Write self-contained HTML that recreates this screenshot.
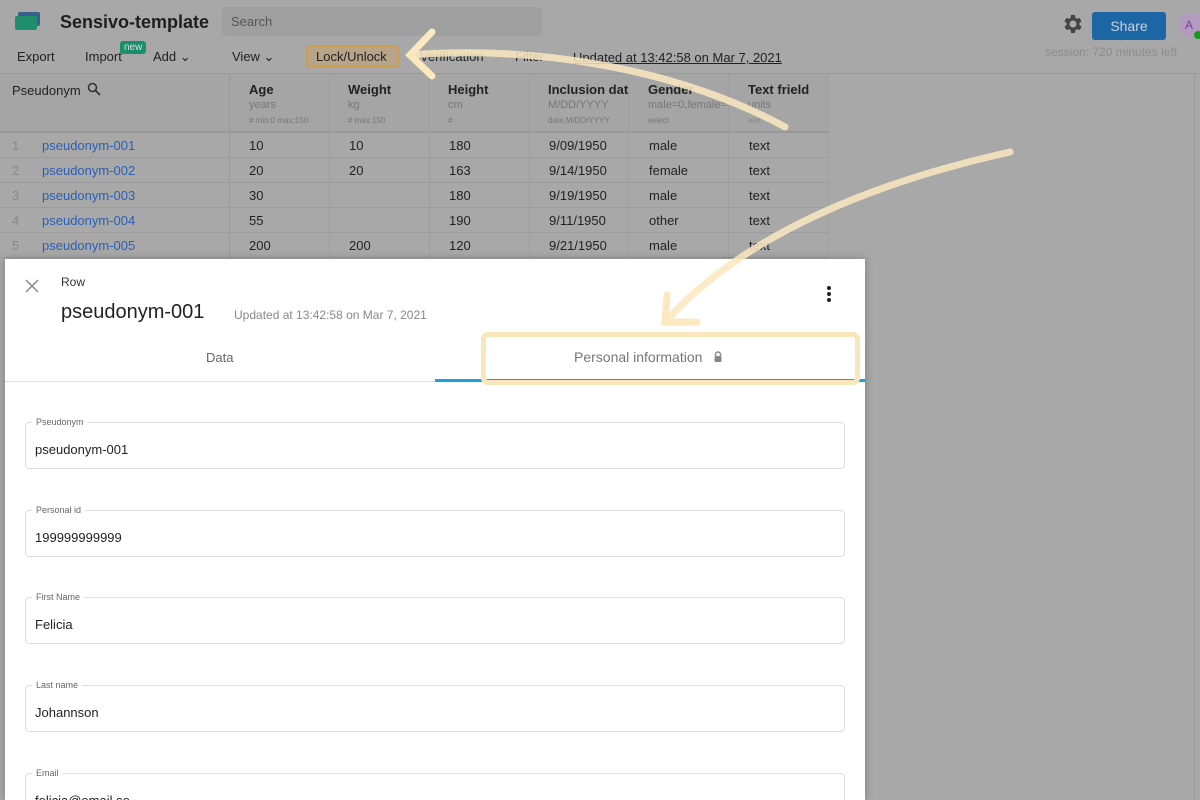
<!DOCTYPE html>
<html style="width:1200px;height:800px;overflow:hidden"><head><meta charset="utf-8"><style>
*{box-sizing:border-box;margin:0;padding:0}
body{width:1200px;height:800px;overflow:hidden;background:#a8a8a8;font-family:"Liberation Sans",sans-serif;position:relative;color:#222}
.a{position:absolute;white-space:nowrap}
.row{position:absolute;left:0;width:829px;height:25px;border-bottom:1px solid #9c9c9c;font-size:13px}
.row span{position:absolute;top:5px}
.fld{position:absolute;left:25px;width:820px;height:47px;border:1px solid #ddd;border-radius:4px}
.fld .l{position:absolute;top:-6px;left:6px;background:#fff;padding:0 4px;font-size:9px;color:#666}
.fld .v{position:absolute;top:19px;left:9px;font-size:13px;color:#222}
</style></head><body>
<svg class="a" style="left:14px;top:11px" width="28" height="20"><rect x="4" y="1" width="22" height="14" rx="2" fill="#3a5f8f"/><rect x="1" y="5" width="22" height="14" rx="2" fill="#1e8f6a"/></svg>
<div class="a" style="left:60px;top:12px;font-size:18px;font-weight:bold;color:#1f1f1f">Sensivo-template</div>
<div class="a" style="left:222px;top:7px;width:320px;height:29px;background:#9f9f9f;border-radius:4px;font-size:13px;color:#555;padding:7px 9px">Search</div>
<div class="a" style="left:17px;top:49px;font-size:13px">Export</div>
<div class="a" style="left:85px;top:49px;font-size:13px">Import</div>
<div class="a" style="left:120px;top:41px;background:#1a8f6a;color:#ddd;font-size:10px;padding:1px 4px;border-radius:3px">new</div>
<div class="a" style="left:153px;top:49px;font-size:13px">Add ⌄</div>
<div class="a" style="left:232px;top:49px;font-size:13px">View ⌄</div>
<div class="a" style="left:306px;top:46px;width:93px;height:21px;border:1px solid #c79a4a;background:#b7a489;border-radius:3px;font-size:13px;padding:2px 9px">Lock/Unlock</div>
<div class="a" style="left:420px;top:49px;font-size:13px">Verification</div>
<div class="a" style="left:515px;top:49px;font-size:13px">Filter</div>
<div class="a" style="left:573px;top:50px;font-size:13px;text-decoration:underline">Updated at 13:42:58 on Mar 7, 2021</div>
<svg class="a" style="left:1060px;top:12px" width="24" height="24" viewBox="0 0 24 24"><path fill="#444" d="M19.4 13a7.5 7.5 0 000-2l2.1-1.6-2-3.5-2.5 1a7 7 0 00-1.7-1L15 3h-4l-.4 2.9a7 7 0 00-1.7 1l-2.5-1-2 3.5L6.6 11a7.5 7.5 0 000 2l-2.1 1.6 2 3.5 2.5-1a7 7 0 001.7 1L11 21h4l.4-2.9a7 7 0 001.7-1l2.5 1 2-3.5zM13 15.5a3.5 3.5 0 110-7 3.5 3.5 0 010 7z"/></svg>
<div class="a" style="left:1092px;top:12px;width:74px;height:28px;background:#1c66a6;border-radius:3px;color:#c8d0dc;font-size:14px;text-align:center;line-height:28px">Share</div>
<div class="a" style="left:1178px;top:13px;width:24px;height:24px;border-radius:50%;background:#b39bbf;color:#7a3fa0;font-size:12px;padding:5px 7px">A</div>
<div class="a" style="left:1194px;top:31px;width:8px;height:8px;border-radius:50%;background:#1a9a1a"></div>
<div class="a" style="left:1045px;top:45px;font-size:12px;color:#8c8c8c">session: 720 minutes left</div>
<div class="a" style="left:0;top:73px;width:1200px;height:1px;background:#999"></div>
<div class="a" style="left:1194px;top:74px;width:1px;height:726px;background:#999"></div>
<div class="a" style="left:0;top:74px;width:829px;height:59px;border-bottom:2px solid #999;background:#a5a5a5"></div>
<div class="a" style="left:12px;top:83px;font-size:13px">Pseudonym</div>
<svg class="a" style="left:87px;top:82px" width="14" height="14"><circle cx="5.5" cy="5.5" r="4" fill="none" stroke="#333" stroke-width="1.6"/><path d="M8.5 8.5L13 13" stroke="#333" stroke-width="1.8"/></svg>
<div class="a" style="left:229px;top:74px;width:1px;height:186px;background:#9a9a9a"></div>
<div class="a" style="left:329px;top:74px;width:1px;height:186px;background:#9e9e9e"></div>
<div class="a" style="left:429px;top:74px;width:1px;height:186px;background:#9e9e9e"></div>
<div class="a" style="left:529px;top:74px;width:1px;height:186px;background:#9e9e9e"></div>
<div class="a" style="left:628px;top:74px;width:1px;height:186px;background:#9e9e9e"></div>
<div class="a" style="left:728px;top:74px;width:1px;height:186px;background:#9e9e9e"></div>
<div class="a" style="left:828px;top:74px;width:1px;height:186px;background:#9e9e9e"></div>
<div class="a" style="left:249px;top:83px;font-size:13px;font-weight:bold;line-height:14px">Age<br><span style="font-weight:normal;font-size:11px;color:#777">years</span><br><span style="font-weight:normal;font-size:8px;color:#777">#&nbsp;min:0 max:150</span></div>
<div class="a" style="left:348px;top:83px;font-size:13px;font-weight:bold;line-height:14px">Weight<br><span style="font-weight:normal;font-size:11px;color:#777">kg</span><br><span style="font-weight:normal;font-size:8px;color:#777">#&nbsp;max:150</span></div>
<div class="a" style="left:448px;top:83px;font-size:13px;font-weight:bold;line-height:14px">Height<br><span style="font-weight:normal;font-size:11px;color:#777">cm</span><br><span style="font-weight:normal;font-size:8px;color:#777">#</span></div>
<div class="a" style="left:548px;top:83px;width:80px;overflow:hidden;font-size:13px;font-weight:bold;line-height:14px">Inclusion dat<br><span style="font-weight:normal;font-size:11px;color:#777">M/DD/YYYY</span><br><span style="font-weight:normal;font-size:8px;color:#777">date,M/DD/YYYY</span></div>
<div class="a" style="left:648px;top:83px;width:80px;overflow:hidden;font-size:13px;font-weight:bold;line-height:14px">Gender<br><span style="font-weight:normal;font-size:11px;color:#777">male=0,female=</span><br><span style="font-weight:normal;font-size:8px;color:#777">select</span></div>
<div class="a" style="left:748px;top:83px;font-size:13px;font-weight:bold;line-height:14px">Text frield<br><span style="font-weight:normal;font-size:11px;color:#777">units</span><br><span style="font-weight:normal;font-size:8px;color:#888">text</span></div>
<div class="row" style="top:133px"><span style="left:12px;color:#888">1</span><span style="left:42px;color:#2a5fb5">pseudonym-001</span><span style="left:249px">10</span><span style="left:349px">10</span><span style="left:449px">180</span><span style="left:549px">9/09/1950</span><span style="left:649px">male</span><span style="left:749px">text</span></div>
<div class="row" style="top:158px"><span style="left:12px;color:#888">2</span><span style="left:42px;color:#2a5fb5">pseudonym-002</span><span style="left:249px">20</span><span style="left:349px">20</span><span style="left:449px">163</span><span style="left:549px">9/14/1950</span><span style="left:649px">female</span><span style="left:749px">text</span></div>
<div class="row" style="top:183px"><span style="left:12px;color:#888">3</span><span style="left:42px;color:#2a5fb5">pseudonym-003</span><span style="left:249px">30</span><span style="left:449px">180</span><span style="left:549px">9/19/1950</span><span style="left:649px">male</span><span style="left:749px">text</span></div>
<div class="row" style="top:208px"><span style="left:12px;color:#888">4</span><span style="left:42px;color:#2a5fb5">pseudonym-004</span><span style="left:249px">55</span><span style="left:449px">190</span><span style="left:549px">9/11/1950</span><span style="left:649px">other</span><span style="left:749px">text</span></div>
<div class="row" style="top:233px"><span style="left:12px;color:#888">5</span><span style="left:42px;color:#2a5fb5">pseudonym-005</span><span style="left:249px">200</span><span style="left:349px">200</span><span style="left:449px">120</span><span style="left:549px">9/21/1950</span><span style="left:649px">male</span><span style="left:749px">text</span></div>
<div class="a" style="left:5px;top:259px;width:860px;height:541px;background:#fff;box-shadow:0 0 8px rgba(0,0,0,.25);overflow:hidden">
<svg class="a" style="left:20px;top:20px" width="14" height="14"><path d="M1 1L13 13M13 1L1 13" stroke="#888" stroke-width="1.5"/></svg>
<div class="a" style="left:56px;top:16px;font-size:12px;color:#333">Row</div>
<div class="a" style="left:56px;top:42px;font-size:20px;color:#222">pseudonym-001</div>
<div class="a" style="left:229px;top:49px;font-size:12px;color:#888">Updated at 13:42:58 on Mar 7, 2021</div>
<svg class="a" style="left:820px;top:26px" width="8" height="18"><circle cx="4" cy="3" r="2" fill="#222"/><circle cx="4" cy="9" r="2" fill="#222"/><circle cx="4" cy="15" r="2" fill="#222"/></svg>
<div class="a" style="left:201px;top:91px;font-size:13px;color:#666">Data</div>
<div class="a" style="left:569px;top:90px;font-size:14px;color:#777">Personal information</div>
<svg class="a" style="left:708px;top:92px" width="10" height="12"><path d="M2.5 5V3.5a2.5 2.5 0 015 0V5" fill="none" stroke="#888" stroke-width="1.4"/><rect x="1.5" y="5" width="7" height="6" rx="1" fill="#888"/></svg>
<div class="a" style="left:0;top:122px;width:860px;height:1px;background:#ddd"></div>
<div class="a" style="left:430px;top:120px;width:430px;height:3px;background:#1ea0e0"></div>
<div class="fld" style="left:20px;top:163px"><div class="l">Pseudonym</div><div class="v">pseudonym-001</div></div>
<div class="fld" style="left:20px;top:251px"><div class="l">Personal id</div><div class="v">199999999999</div></div>
<div class="fld" style="left:20px;top:338px"><div class="l">First Name</div><div class="v">Felicia</div></div>
<div class="fld" style="left:20px;top:426px"><div class="l">Last name</div><div class="v">Johannson</div></div>
<div class="fld" style="left:20px;top:514px"><div class="l">Email</div><div class="v">felicia@email.se</div></div>
</div>
<div class="a" style="left:481px;top:332px;width:379px;height:53px;border:5px solid #fae6bb;border-radius:7px"></div>
<svg class="a" style="left:0;top:0" width="1200" height="800">
<path d="M785 127 C680 70 540 45 410 55" fill="none" stroke="#fbe8bf" stroke-opacity=".85" stroke-width="7" stroke-linecap="round"/>
<path d="M432 32 L410 55 L432 76" fill="none" stroke="#fbe8bf" stroke-width="7" stroke-linecap="round"/>
<path d="M1010 152 C840 190 730 250 665 322" fill="none" stroke="#fbe8bf" stroke-opacity=".85" stroke-width="7" stroke-linecap="round"/>
<path d="M667 295 L665 322 L697 322" fill="none" stroke="#fbe8bf" stroke-width="7" stroke-linecap="round"/>
</svg>
</body></html>
